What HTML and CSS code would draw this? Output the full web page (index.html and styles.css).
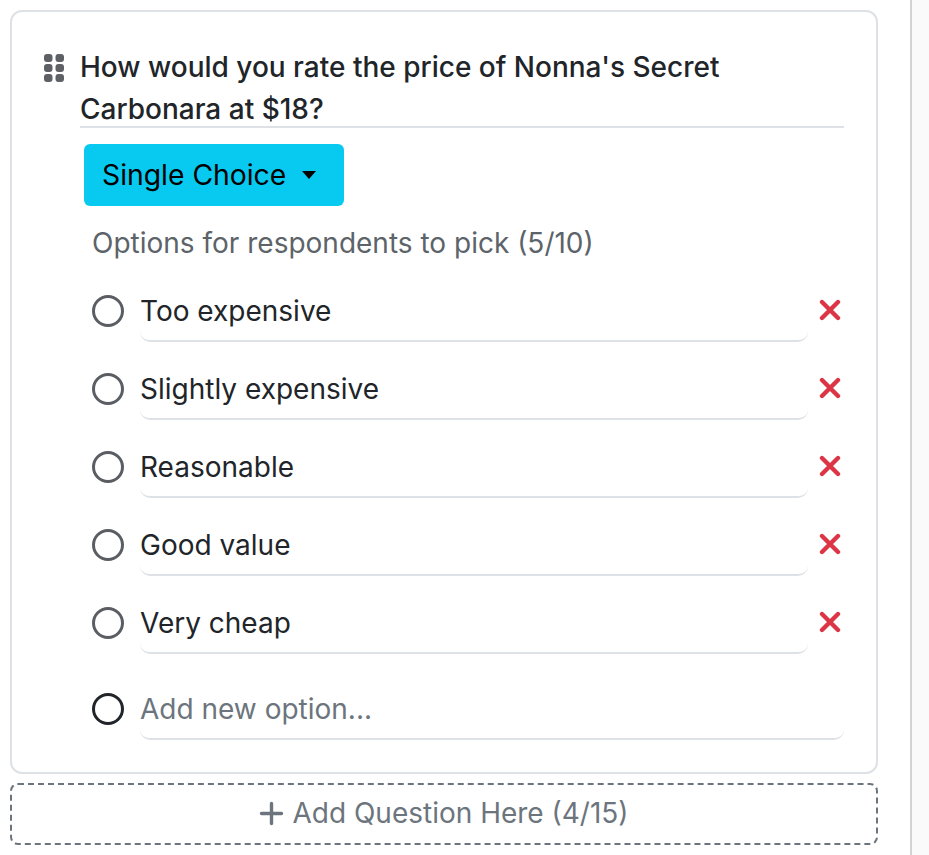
FILE: index.html
```html
<!DOCTYPE html>
<html lang="en">
<head>
<meta charset="utf-8">
<title>Survey question editor</title>
<link rel="stylesheet" href="styles.css">
</head>
<body>
<main class="editor">
  <section class="card">
    <div class="question">
      <svg class="grip" viewBox="0 0 20 28" aria-hidden="true">
        <rect x="0" y="0" width="8.5" height="8" rx="3"/><rect x="11.5" y="0" width="8.5" height="8" rx="3"/>
        <rect x="0" y="10" width="8.5" height="8" rx="3"/><rect x="11.5" y="10" width="8.5" height="8" rx="3"/>
        <rect x="0" y="20" width="8.5" height="8" rx="3"/><rect x="11.5" y="20" width="8.5" height="8" rx="3"/>
      </svg>
      <div class="question-text">How would you rate the price of Nonna's Secret Carbonara at $18?</div>
    </div>
    <button class="type-btn">Single Choice<span class="caret"></span></button>
    <p class="hint">Options for respondents to pick (5/10)</p>
    <ul class="options">
      <li class="option"><span class="radio"></span><span class="opt-text">Too expensive</span><svg class="remove" viewBox="0 0 22 22" aria-hidden="true"><path d="M3 3 19 19M19 3 3 19"/></svg></li>
      <li class="option"><span class="radio"></span><span class="opt-text">Slightly expensive</span><svg class="remove" viewBox="0 0 22 22" aria-hidden="true"><path d="M3 3 19 19M19 3 3 19"/></svg></li>
      <li class="option"><span class="radio"></span><span class="opt-text">Reasonable</span><svg class="remove" viewBox="0 0 22 22" aria-hidden="true"><path d="M3 3 19 19M19 3 3 19"/></svg></li>
      <li class="option"><span class="radio"></span><span class="opt-text">Good value</span><svg class="remove" viewBox="0 0 22 22" aria-hidden="true"><path d="M3 3 19 19M19 3 3 19"/></svg></li>
      <li class="option"><span class="radio"></span><span class="opt-text">Very cheap</span><svg class="remove" viewBox="0 0 22 22" aria-hidden="true"><path d="M3 3 19 19M19 3 3 19"/></svg></li>
    </ul>
    <div class="option new-option"><span class="radio dark"></span><span class="opt-text placeholder">Add new option...</span></div>
  </section>
  <button class="add-question"><svg class="plus" viewBox="0 0 25 25" aria-hidden="true"><path d="M12.5 2.5V22.5M2.5 12.5H22.5"/></svg>Add Question Here (4/15)</button>
</main>
<aside class="side"></aside>
</body>
</html>
```
FILE: styles.css
```css
* { box-sizing: border-box; }
html, body { margin: 0; height: 100%; }
body {
  display: flex;
  height: 855px;
  overflow: hidden;
  background: #fff;
  font-family: Inter, "Liberation Sans", sans-serif;
  font-size: 28px;
  line-height: 42px;
  color: #212529;
}
.editor {
  width: 912px;
  flex: none;
  padding: 10px 32px 0 10px;
  border-right: 2px solid #d3d3d3;
}
.side { flex: 1; background: #fafafa; }
.card {
  height: 764px;
  border: 2px solid #dee2e6;
  border-radius: 12px;
  padding: 34px 32px 0 32px;
}
.question { display: flex; }
.grip { width: 20px; height: 28px; flex: none; margin-top: 8px; fill: #5d6166; }
.question-text {
  margin-left: 16px;
  flex: 1;
  height: 82px;
  border-bottom: 2px solid #dee2e6;
  font-weight: 500;
}
.type-btn {
  display: flex;
  align-items: center;
  width: 260px;
  height: 62px;
  margin: 16px 0 0 40px;
  padding: 0 0 0 18px;
  border: 0;
  border-radius: 6px;
  background: #08c9f0;
  color: #000;
  font: inherit;
  font-size: 28.3px;
}
.caret {
  margin: 0 0 0 16px;
  border-style: solid;
  border-width: 8px 7.5px 0;
  border-color: #000 transparent transparent;
}
.hint { margin: 16px 0 0 48px; color: #5c6369; }
.options { list-style: none; margin: 17px 0 0 48px; padding: 0; }
.option { display: flex; align-items: flex-start; height: 78px; }
.radio {
  width: 32px;
  height: 32px;
  flex: none;
  margin-top: 14px;
  border: 3.6px solid #5a5e63;
  border-radius: 50%;
}
.radio.dark { border-color: #212529; }
.opt-text {
  margin: 0 0 0 16px;
  padding-top: 9px;
  width: 668px;
  height: 61px;
  border-bottom: 2px solid #dee2e6;
  border-radius: 0 0 10px 10px;
}
.remove { width: 22px; height: 22px; flex: none; margin: 18px 0 0 11px; fill: none; stroke: #dc3545; stroke-width: 4.4; stroke-linecap: round; }
.new-option { margin: 8px 0 0 48px; }
.new-option .opt-text { width: 704px; }
.placeholder { color: #6c757d; }
.add-question {
  display: flex;
  align-items: center;
  justify-content: center;
  width: 868px;
  height: 62px;
  margin-top: 9px;
  padding: 0 0 2px;
  border: 2px dashed #6c757d;
  border-radius: 8px;
  background: transparent;
  color: #6c757d;
  font: inherit;
}
.plus { width: 25px; height: 25px; margin-right: 8px; fill: none; stroke: #6c757d; stroke-width: 3.4; stroke-linecap: round; }
```
